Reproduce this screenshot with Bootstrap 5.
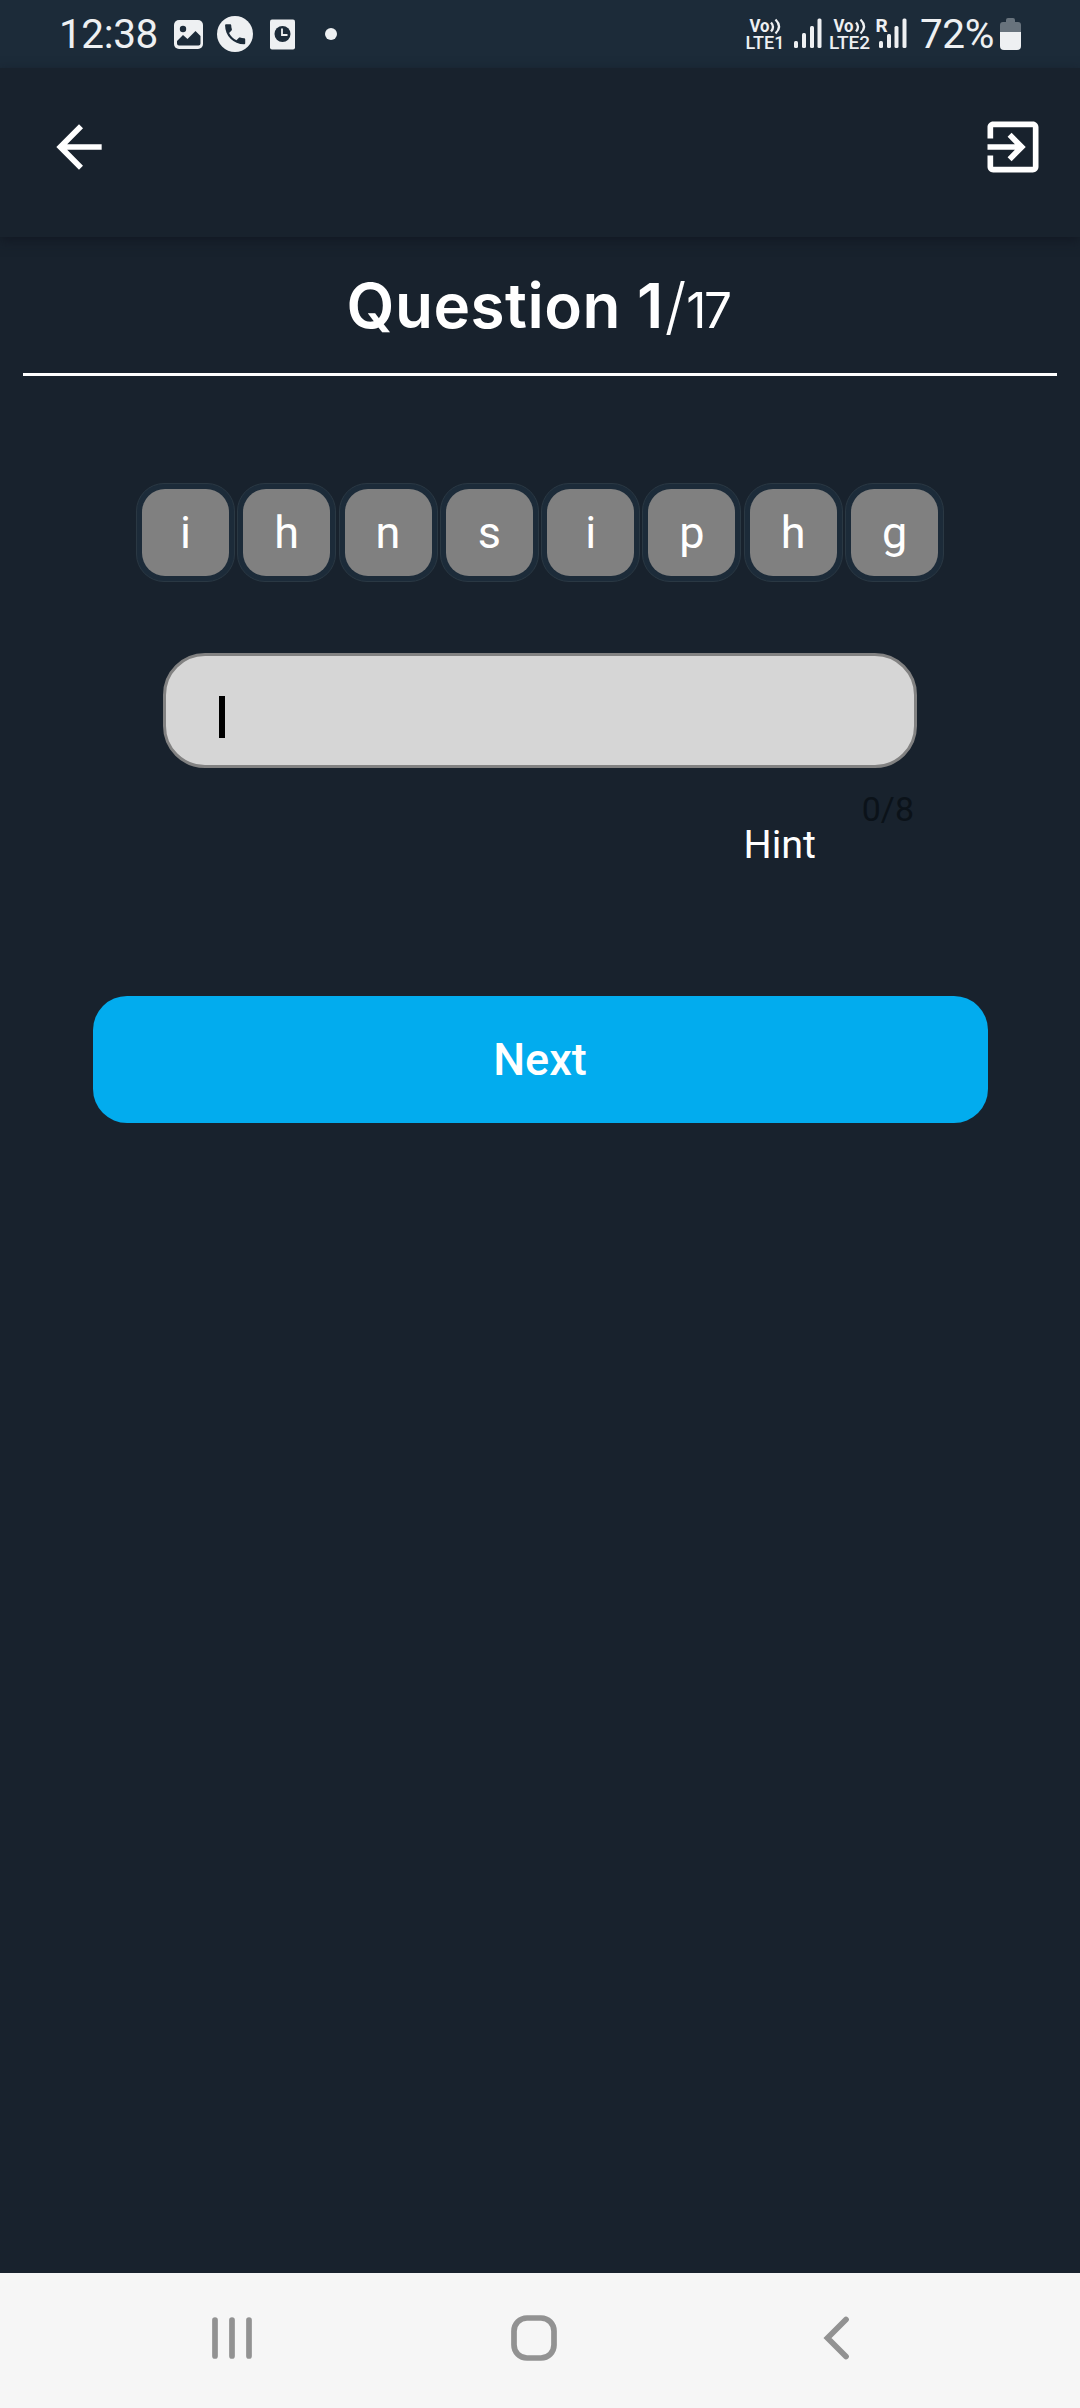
<!DOCTYPE html>
<html lang="en">
<head>
<meta charset="utf-8">
<meta name="viewport" content="width=device-width, initial-scale=1">
<title>Question 1/17</title>
<link href="https://cdn.jsdelivr.net/npm/bootstrap@5.3.0/dist/css/bootstrap.min.css" rel="stylesheet">
<style>
body{width:1080px;height:2408px;background:#18222d;color:#fff;font-family:Roboto,"Noto Sans",sans-serif;overflow:hidden}
svg{display:block;flex:none}
.status-bar{height:68px;background:#1c2b39;color:#eef0f2;padding:0 58px 0 59px;flex:none}
.status-text{font-size:40.5px;line-height:68px;letter-spacing:-.4px;font-weight:400}
.notice-icons{margin-left:2px}
.app-bar{height:169px;padding:0 33.5px 11px 45px;box-shadow:0 4px 11px rgba(16,20,30,.65);flex:none}
.quiz-head{margin:0 23px;height:139px;border-bottom:3px solid #fff;padding-top:27px}
.quiz-title{font-family:Inter,"Open Sans",sans-serif;font-weight:600;font-size:62px;line-height:84px;letter-spacing:.5px;white-space:nowrap;margin-left:-4px!important}
.quiz-title .slash{font-weight:300;letter-spacing:0;margin-left:1px}
.quiz-title .total{font-weight:400;font-size:49.5px;letter-spacing:-2.5px}
.tiles{margin-top:106.500px;gap:2.3px}
.tile{width:99px;height:99px;border:1px solid #2a3843;border-radius:28px;background:#1c2b39;padding:5px}
.tile-face{width:87px;height:87px;border-radius:23px;background:#808080;font-size:45px;line-height:88px;text-align:center}
.answer-group{width:754px;margin:71.500px auto 0}
.answer{height:115px;border:3px solid #828282;border-radius:42px;background:#d6d6d6;padding:13px 0 0 53px}
.caret{width:6px;height:42px;background:#000}
.counter{font-size:34px;line-height:40px;color:#0b1219;margin:21px 3px 0 0}
.hint{font-size:39.5px;line-height:46px;margin:-7px 101px 0 0}
.next-btn,.next-btn:hover{width:895px;height:127px;margin:128px auto 0;border-radius:34px;background:#02acee;color:#fff;border:0;font-size:45px;font-weight:500;line-height:127px;padding:0}
.nav-bar{height:135px;background:#f6f6f6}
</style>
</head>
<body class="d-flex flex-column">
<div class="status-bar d-flex align-items-center justify-content-between">
  <div class="d-flex align-items-center">
    <span class="status-text">12:38</span>
    <svg class="notice-icons" width="180" height="68" viewBox="160 0 180 68" fill="#eef0f2">
      <rect x="174" y="20" width="29" height="29" rx="5"/>
      <circle cx="183" cy="29" r="3.2" fill="#1c2b39"/>
      <path fill="#1c2b39" d="M177 41l6-6 4.500 4 8-8 5 5v7.500q0 2-2 2H179q-2 0-2-2z"/>
      <circle cx="235" cy="34" r="18"/>
      <path fill="#1c2b39" transform="translate(221.700 20.800) scale(1.120)" d="M6.600 10.800c1.400 2.800 3.800 5.100 6.600 6.600l2.200-2.200c.3-.3.700-.4 1-.2 1.100.4 2.300.6 3.600.6.500 0 1 .4 1 1V20c0 .5-.5 1-1 1C10.600 21 3 13.400 3 4c0-.5.500-1 1-1h3.500c.5 0 1 .5 1 1 0 1.300.2 2.500.6 3.600.1.300 0 .7-.3 1z"/>
      <rect x="270" y="19.500" width="25" height="30" rx="2"/>
      <circle cx="282.500" cy="34" r="8" fill="#1c2b39"/>
      <path d="M282 28.500V35h5.500" fill="none" stroke="#eef0f2" stroke-width="1.800"/>
      <circle cx="331" cy="34" r="6"/>
    </svg>
  </div>
  <div class="d-flex align-items-center">
    <svg width="175" height="68" viewBox="744 0 175 68" fill="#eef0f2" font-family="Roboto" font-weight="700">
      <text x="748.500" y="32" font-size="18" textLength="20" lengthAdjust="spacingAndGlyphs">Vo</text>
      <path d="M770 22.500q4 4.500 0 9M774.500 19.500q7 7 0 14" fill="none" stroke="#eef0f2" stroke-width="2.300"/>
      <text x="744.500" y="49" font-size="18.500" font-weight="500" textLength="39" lengthAdjust="spacingAndGlyphs">LTE1</text>
      <rect x="793" y="41" width="4" height="7" rx="1.500"/><rect x="801" y="33" width="4" height="15" rx="1.500"/><rect x="809" y="26" width="4" height="22" rx="1.500"/><rect x="816.500" y="18.500" width="4" height="29.500" rx="1.500"/>
      <text x="832.500" y="32" font-size="18" textLength="20" lengthAdjust="spacingAndGlyphs">Vo</text>
      <path d="M855 22.500q4 4.500 0 9M859.500 19.500q7 7 0 14" fill="none" stroke="#eef0f2" stroke-width="2.300"/>
      <text x="828" y="49" font-size="18.500" font-weight="500" textLength="41" lengthAdjust="spacingAndGlyphs">LTE2</text>
      <text x="874.500" y="32" font-size="19">R</text>
      <rect x="878" y="41" width="4" height="7" rx="1.500"/><rect x="886" y="34" width="4" height="14" rx="1.500"/><rect x="893.500" y="26" width="4" height="22" rx="1.500"/><rect x="901.500" y="18.500" width="4" height="29.500" rx="1.500"/>
    </svg>
    <span class="status-text">72%</span>
    <svg class="ms-1" width="24" height="68" viewBox="998 0 24 68"><path fill="#68737d" d="M1006 20q0-2 2-2h5q2 0 2 2v2h3q3 0 3 3v8h-21v-8q0-3 3-3h3z"/><path fill="#eef0f2" d="M1000 32h21v14q0 4-4 4h-13q-4 0-4-4z"/></svg>
  </div>
</div>

<header class="app-bar d-flex align-items-center justify-content-between">
  <svg width="68" height="68" viewBox="0 0 24 24" fill="#fff"><path d="M20 11H7.830l5.590-5.590L12 4l-8 8 8 8 1.410-1.410L7.830 13H20z"/></svg>
  <svg width="68" height="68" viewBox="0 0 24 24" fill="#fff"><path d="M10.090 15.590L11.500 17l5-5-5-5-1.410 1.410L12.670 11H3v2h9.670zM19 3H5c-1.110 0-2 .9-2 2v4h2V5h14v14H5v-4H3v4c0 1.100.89 2 2 2h14c1.100 0 2-.9 2-2V5c0-1.100-.9-2-2-2z"/></svg>
</header>

<main class="d-flex flex-column flex-grow-1">
  <div class="quiz-head text-center"><h1 class="quiz-title m-0">Question 1<span class="slash">/</span><span class="total">17</span></h1></div>
  <div class="tiles d-flex justify-content-center">
    <div class="tile"><div class="tile-face">i</div></div>
    <div class="tile"><div class="tile-face">h</div></div>
    <div class="tile"><div class="tile-face">n</div></div>
    <div class="tile"><div class="tile-face">s</div></div>
    <div class="tile"><div class="tile-face">i</div></div>
    <div class="tile"><div class="tile-face">p</div></div>
    <div class="tile"><div class="tile-face">h</div></div>
    <div class="tile"><div class="tile-face">g</div></div>
  </div>
  <div class="answer-group d-flex flex-column">
    <div class="answer d-flex align-items-center"><div class="caret"></div></div>
    <div class="counter align-self-end">0/8</div>
    <div class="hint align-self-end">Hint</div>
  </div>
  <button type="button" class="btn next-btn">Next</button>
</main>

<nav class="nav-bar flex-shrink-0">
  <svg width="1080" height="135" viewBox="0 2273 1080 135" fill="none" stroke="#929292" stroke-width="5.700" stroke-linecap="round">
    <path d="M215 2320v36M232 2320v36M249 2320v36"/>
    <rect x="514" y="2318" width="40" height="40" rx="13"/>
    <path d="M846 2319.500L827.500 2338l18.500 18.500"/>
  </svg>
</nav>
<script src="https://cdn.jsdelivr.net/npm/bootstrap@5.3.0/dist/js/bootstrap.bundle.min.js"></script>
</body>
</html>
